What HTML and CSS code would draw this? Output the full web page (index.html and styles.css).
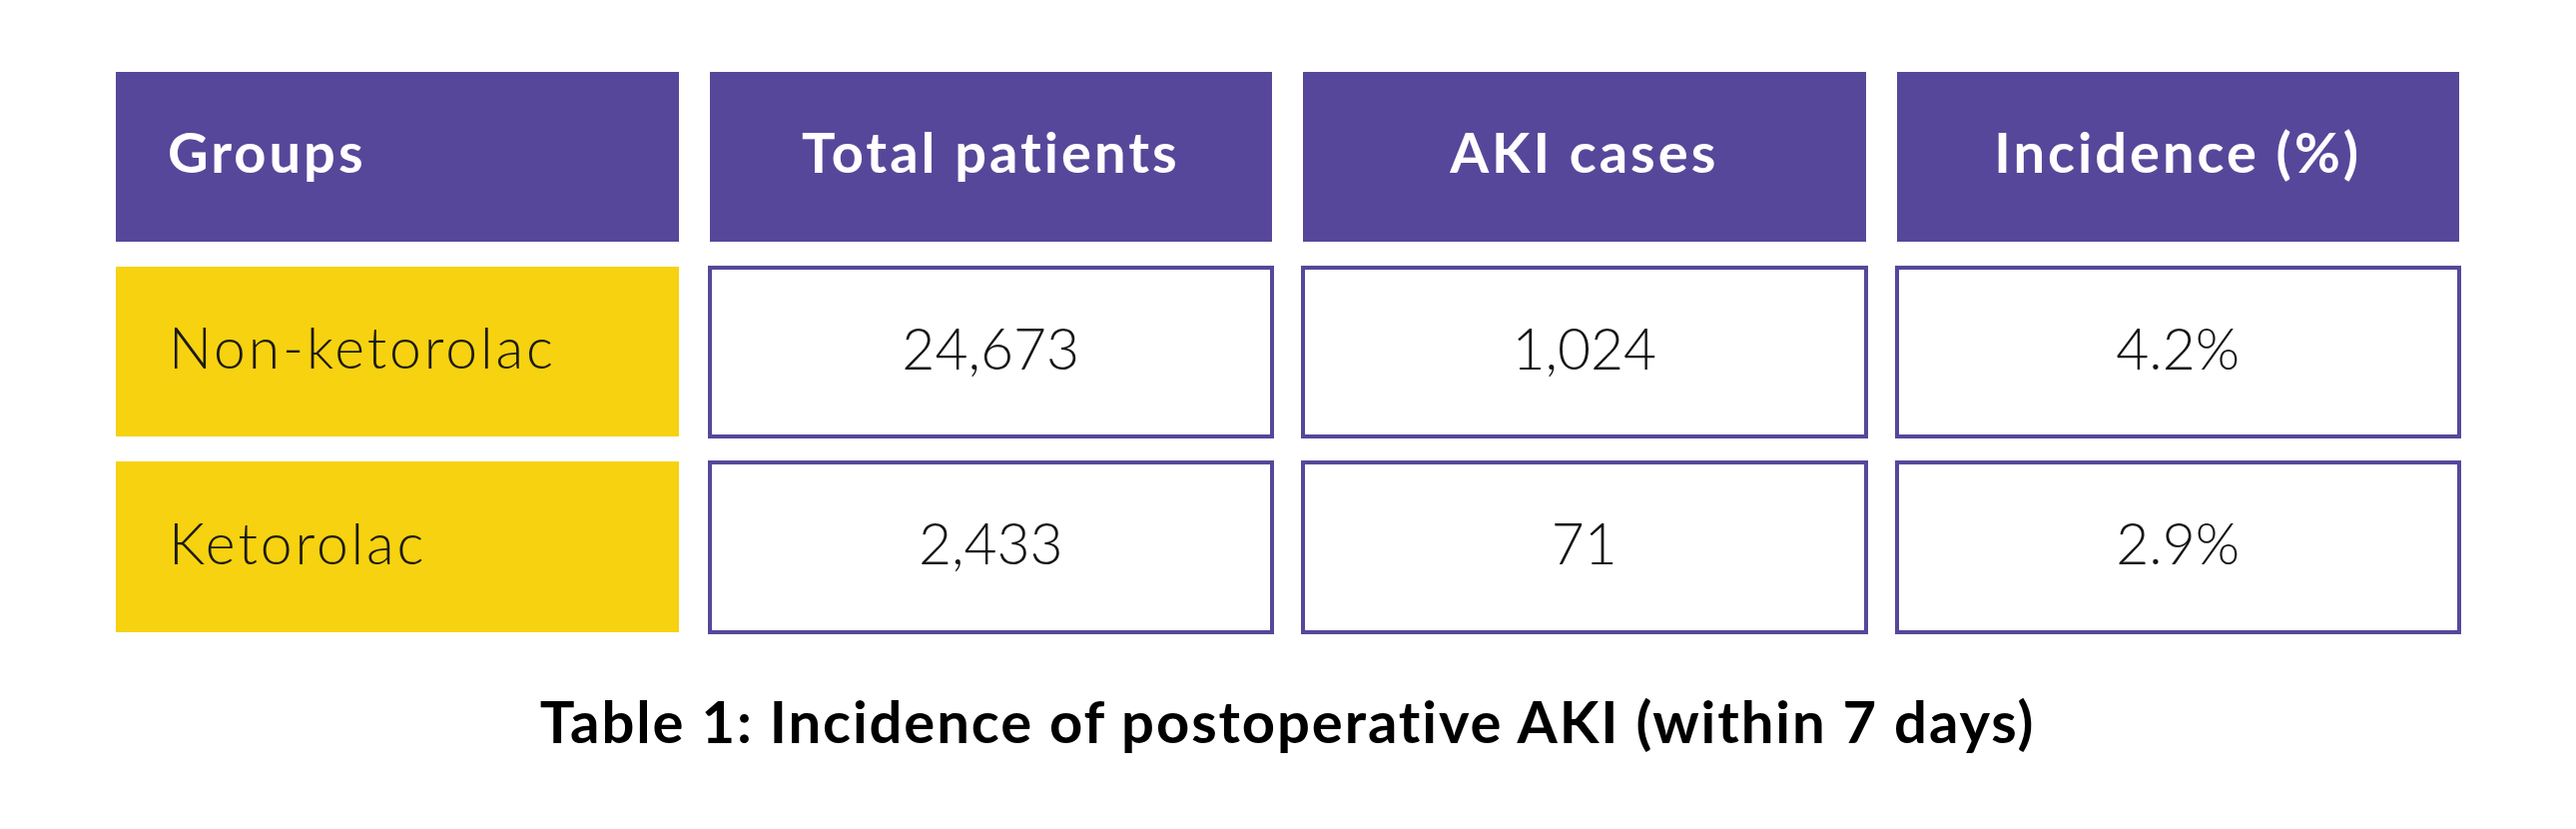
FILE: index.html
```html
<!DOCTYPE html>
<html lang="en">
<head>
<meta charset="utf-8">
<title>Table 1: Incidence of postoperative AKI</title>
<link rel="stylesheet" href="styles.css">
</head>
<body>
<main class="page">
  <div class="table">
    <div class="cell head first">Groups</div>
    <div class="cell head">Total patients</div>
    <div class="cell head">AKI cases</div>
    <div class="cell head">Incidence (%)</div>

    <div class="cell group">Non-ketorolac</div>
    <div class="cell value">24,673</div>
    <div class="cell value">1,024</div>
    <div class="cell value">4.2%</div>

    <div class="cell group">Ketorolac</div>
    <div class="cell value">2,433</div>
    <div class="cell value">71</div>
    <div class="cell value">2.9%</div>
  </div>
  <p class="caption">Table 1: Incidence of postoperative AKI (within 7 days)</p>
</main>
</body>
</html>
```

FILE: styles.css
```css
html, body {
  margin: 0;
  padding: 0;
  background: #ffffff;
}

body {
  font-family: "Lato", "Open Sans", "Liberation Sans", sans-serif;
  width: 2580px;
  height: 830px;
  overflow: hidden;
}

.page {
  padding: 72px 0 0 116px;
  width: 2347px;
}

.table {
  display: grid;
  grid-template-columns: repeat(4, 1fr);
  grid-template-rows: 170px 170px 171px;
  column-gap: 31px;
  row-gap: 25px;
}

.cell {
  display: flex;
  align-items: center;
  justify-content: center;
  line-height: 70px;
  padding-bottom: 10px;
  box-sizing: border-box;
}

.head {
  background: #57479a;
  color: #ffffff;
  font-weight: 700;
  font-size: 56px;
  letter-spacing: 3px;
}

.head.first {
  justify-content: flex-start;
  padding-left: 52px;
}

.group {
  background: #f7d210;
  color: #1c1a12;
  font-weight: 300;
  font-size: 57px;
  letter-spacing: 2.9px;
  justify-content: flex-start;
  padding-left: 53px;
}

.value {
  border: 4px solid #57479a;
  margin: -1px -2px -2px -2px;
  background: #ffffff;
  color: #141414;
  font-weight: 300;
  font-size: 57px;
}

.caption {
  margin: 54px 0 0 0;
  text-align: center;
  font-weight: 700;
  font-size: 58px;
  letter-spacing: 1.9px;
  line-height: 70px;
  color: #000000;
}
```
